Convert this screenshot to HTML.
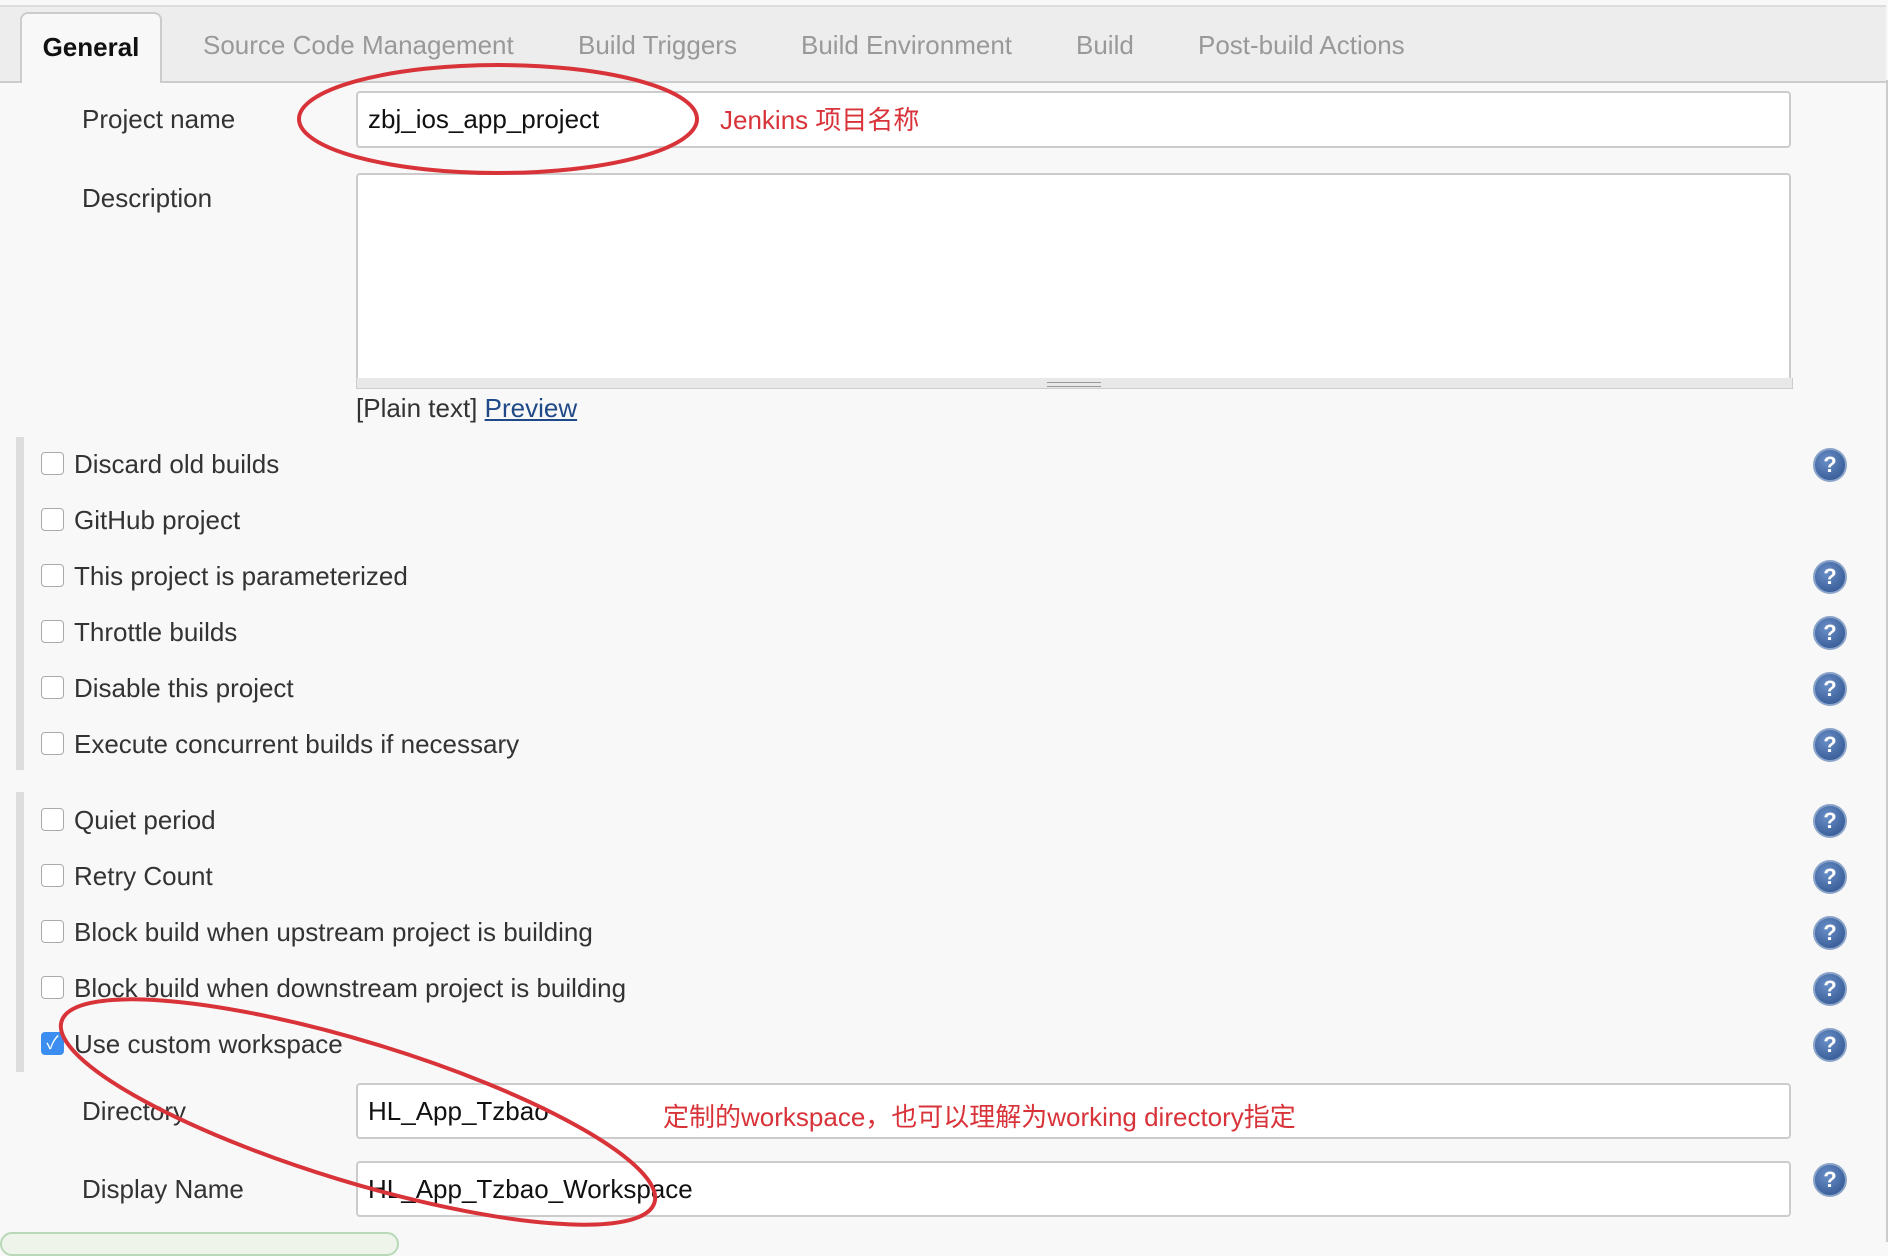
<!DOCTYPE html><html><head><meta charset="utf-8"><style>
body{margin:0;width:1888px;height:1242px;background:#f8f8f8;font-family:"Liberation Sans","Noto Sans CJK SC",sans-serif;position:relative;overflow:hidden;color:#333}
.a{position:absolute;white-space:nowrap}
.tabbar{position:absolute;left:0;top:5px;width:1886px;height:74px;background:#ededed;border-top:2px solid #ddd;border-bottom:2px solid #ccc}
.tab{position:absolute;top:30px;font-size:26px;color:#999}
.gen{position:absolute;left:20px;top:12px;width:138px;height:69px;background:#f8f8f8;border:2px solid #ccc;border-bottom:none;border-radius:8px 8px 0 0;font-weight:bold;font-size:26px;color:#111;text-align:center;line-height:66px}
.lbl{font-size:26px;color:#333}
.inp{position:absolute;left:356px;width:1435px;background:#fff;border:2px solid #ccc;border-radius:4px;box-sizing:border-box;font-size:26px;color:#111;padding-left:10px}
.cb{position:absolute;left:41px;width:21px;height:21px;border:1.5px solid #aaa;border-radius:4px;background:#fff}
.help{position:absolute;left:1813px;width:30px;height:30px;border-radius:50%;background:radial-gradient(circle at 40% 35%,#6a8fc8,#2a4f8a);border:2px solid #8aa3c8;color:#fff;font-weight:bold;font-size:22px;text-align:center;line-height:30px}
.bar{position:absolute;left:16px;width:8px;background:#ddd}
.red{color:#d9333a;font-size:26px}
</style></head><body>
<div class="tabbar"></div>
<div class="gen">General</div>
<div class="tab a" style="left:203px">Source Code Management</div>
<div class="tab a" style="left:578px">Build Triggers</div>
<div class="tab a" style="left:801px">Build Environment</div>
<div class="tab a" style="left:1076px">Build</div>
<div class="tab a" style="left:1198px">Post-build Actions</div>
<div style="position:absolute;right:0;top:80px;width:2px;height:1162px;background:#ccc"></div>

<div class="a lbl" style="left:82px;top:104px">Project name</div>
<div class="inp" style="top:91px;height:57px;line-height:53px">zbj_ios_app_project</div>
<div class="a red" style="left:720px;top:100px">Jenkins 项目名称</div>
<div class="a lbl" style="left:82px;top:183px">Description</div>
<div class="inp" style="top:173px;height:208px"></div>
<div style="position:absolute;left:356px;top:378px;width:1435px;height:10px;background:#e8e8e8;border:1px solid #ccc;border-top:none"></div>
<div style="position:absolute;left:1047px;top:382px;width:54px;height:3px;border-top:1px solid #999;border-bottom:1px solid #999"></div>
<div class="a lbl" style="left:356px;top:393px">[Plain text] <span style="color:#204a87;text-decoration:underline">Preview</span></div>

<div class="bar" style="top:437px;height:333px"></div>
<div class="bar" style="top:792px;height:280px"></div>

<div class="cb" style="top:452px"></div><div class="a lbl" style="left:74px;top:449px">Discard old builds</div><div class="help" style="top:448px">?</div>
<div class="cb" style="top:508px"></div><div class="a lbl" style="left:74px;top:505px">GitHub project</div>
<div class="cb" style="top:564px"></div><div class="a lbl" style="left:74px;top:561px">This project is parameterized</div><div class="help" style="top:560px">?</div>
<div class="cb" style="top:620px"></div><div class="a lbl" style="left:74px;top:617px">Throttle builds</div><div class="help" style="top:616px">?</div>
<div class="cb" style="top:676px"></div><div class="a lbl" style="left:74px;top:673px">Disable this project</div><div class="help" style="top:672px">?</div>
<div class="cb" style="top:732px"></div><div class="a lbl" style="left:74px;top:729px">Execute concurrent builds if necessary</div><div class="help" style="top:728px">?</div>

<div class="cb" style="top:808px"></div><div class="a lbl" style="left:74px;top:805px">Quiet period</div><div class="help" style="top:804px">?</div>
<div class="cb" style="top:864px"></div><div class="a lbl" style="left:74px;top:861px">Retry Count</div><div class="help" style="top:860px">?</div>
<div class="cb" style="top:920px"></div><div class="a lbl" style="left:74px;top:917px">Block build when upstream project is building</div><div class="help" style="top:916px">?</div>
<div class="cb" style="top:976px"></div><div class="a lbl" style="left:74px;top:973px">Block build when downstream project is building</div><div class="help" style="top:972px">?</div>
<div class="cb" style="top:1032px;background:#3b8ef0;border-color:#3b8ef0;color:#fff;font-size:18px;text-align:center;line-height:21px">✓</div><div class="a lbl" style="left:74px;top:1029px">Use custom workspace</div><div class="help" style="top:1028px">?</div>

<div class="a lbl" style="left:82px;top:1096px">Directory</div>
<div class="inp" style="top:1083px;height:56px;line-height:52px">HL_App_Tzbao</div>
<div class="a red" style="left:663px;top:1097px;font-size:26px">定制的workspace，也可以理解为working directory指定</div>
<div class="a lbl" style="left:82px;top:1174px">Display Name</div>
<div class="inp" style="top:1161px;height:56px;line-height:52px">HL_App_Tzbao_Workspace</div>
<div class="help" style="top:1163px">?</div>
<div style="position:absolute;left:0;top:1232px;width:395px;height:20px;background:#eef4ea;border:2px solid #b8d8b8;border-radius:12px"></div>

<svg style="position:absolute;left:0;top:0" width="1888" height="1242"><g fill="none" stroke="#d9333a" stroke-width="4">
<ellipse cx="498" cy="119" rx="199" ry="54"/>
<ellipse cx="358" cy="1112" rx="310" ry="70" transform="rotate(17 358 1112)"/></g></svg>
</body></html>
